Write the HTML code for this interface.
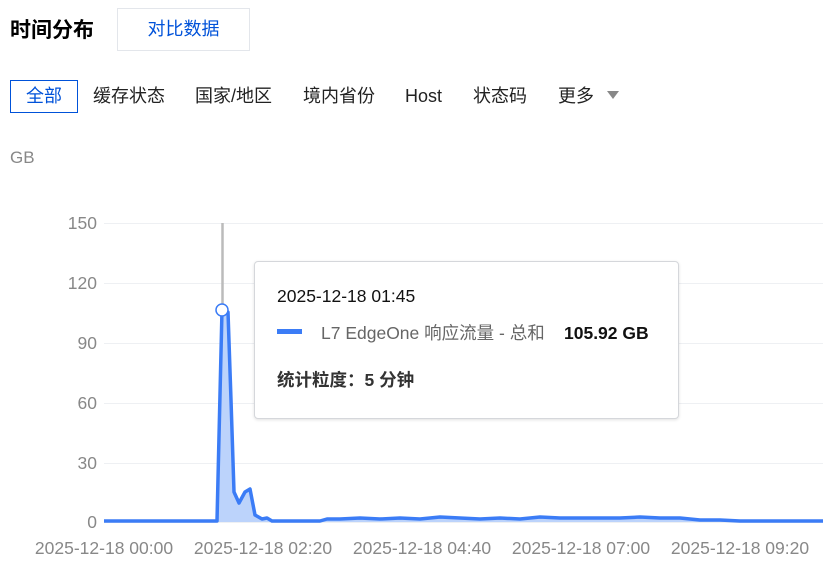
<!DOCTYPE html>
<html><head><meta charset="utf-8"><style>
body{margin:0;width:823px;height:578px;background:#fff;font-family:"Liberation Sans","Noto Sans CJK SC",sans-serif;position:relative;overflow:hidden}
.a{position:absolute;white-space:nowrap}
.tab{position:absolute;top:84px;height:24px;line-height:24px;font-size:18px;color:#222}
</style></head><body>
<div class="a" style="left:10px;top:14px;font-size:21px;font-weight:bold;color:#000">时间分布</div>
<div class="a" style="left:117px;top:8px;width:133px;height:43px;border:1px solid #e3e6eb;box-sizing:border-box;text-align:center;line-height:41px;font-size:18px;color:#0052d9">对比数据</div>
<div class="a" style="left:10px;top:80px;width:68px;height:33px;border:1px solid #0052d9;box-sizing:border-box;text-align:center;line-height:31px;font-size:18px;color:#0052d9">全部</div>
<div class="tab" style="left:93px">缓存状态</div>
<div class="tab" style="left:195px">国家/地区</div>
<div class="tab" style="left:303px">境内省份</div>
<div class="tab" style="left:405px">Host</div>
<div class="tab" style="left:473px">状态码</div>
<div class="tab" style="left:558px">更多</div>
<svg class="a" style="left:606px;top:90px" width="14" height="10"><path d="M1 1h12L7 9z" fill="#888"/></svg>
<div class="a" style="left:10px;top:148px;font-size:17px;color:#888">GB</div>
<svg class="a" style="left:0;top:0" width="823" height="578">
<g stroke="#eef0f3" stroke-width="1">
<line x1="104" y1="223.5" x2="823" y2="223.5"/><line x1="104" y1="283.5" x2="823" y2="283.5"/><line x1="104" y1="343.5" x2="823" y2="343.5"/><line x1="104" y1="403.5" x2="823" y2="403.5"/><line x1="104" y1="463.5" x2="823" y2="463.5"/><line x1="104" y1="522.5" x2="823" y2="522.5"/>
</g>
<g font-size="17.5" fill="#888" text-anchor="end">
<text x="97" y="229">150</text><text x="97" y="289">120</text><text x="97" y="349">90</text><text x="97" y="409">60</text><text x="97" y="469">30</text><text x="97" y="528">0</text>
</g>
<g font-size="17.5" fill="#888" text-anchor="middle">
<text x="104" y="554">2025-12-18 00:00</text><text x="263" y="554">2025-12-18 02:20</text><text x="422" y="554">2025-12-18 04:40</text><text x="581" y="554">2025-12-18 07:00</text><text x="740" y="554">2025-12-18 09:20</text>
</g>
<line x1="222.5" y1="223" x2="222.5" y2="522" stroke="#bbb" stroke-width="2.5"/>
<path d="M104 521L217 521L222 310L228 312L231 400L234 492L239 503L245 492L250 489L255 515L262 519L267 518L272 521L320 521L327 519L340 519L360 518L380 519L400 518L420 519L440 517L460 518L480 519L500 518L520 519L540 517L560 518L580 518L600 518L620 518L640 517L660 518L680 518L700 520L720 520L740 521L823 521L823 522L104 522Z" fill="#bcd3fb"/>
<path d="M104 521L217 521L222 310L228 312L231 400L234 492L239 503L245 492L250 489L255 515L262 519L267 518L272 521L320 521L327 519L340 519L360 518L380 519L400 518L420 519L440 517L460 518L480 519L500 518L520 519L540 517L560 518L580 518L600 518L620 518L640 517L660 518L680 518L700 520L720 520L740 521L823 521" fill="none" stroke="#3b7cf6" stroke-width="3.5" stroke-linejoin="round"/>
<circle cx="222" cy="310" r="6" fill="#fff" stroke="#3b7cf6" stroke-width="1.5"/>
</svg>
<div class="a" style="left:254px;top:261px;width:425px;height:158px;background:#fff;border:1px solid #d5d7db;border-radius:4px;box-shadow:0 1px 3px rgba(0,0,0,.12);box-sizing:border-box">
<div class="a" style="left:22px;top:24px;font-size:17.5px;color:#111">2025-12-18 01:45</div>
<div class="a" style="left:22px;top:67px;width:25px;height:5px;background:#3b7cf6"></div>
<div class="a" style="left:66px;top:59px;height:24px;line-height:24px;font-size:17.5px;color:#666">L7 EdgeOne 响应流量 - 总和</div>
<div class="a" style="left:309px;top:59px;height:24px;line-height:24px;font-size:17.5px;font-weight:bold;color:#111">105.92 GB</div>
<div class="a" style="left:22px;top:106px;height:24px;line-height:24px;font-size:17.5px;font-weight:bold;color:#333">统计粒度：5 分钟</div>
</div>
</body></html>
